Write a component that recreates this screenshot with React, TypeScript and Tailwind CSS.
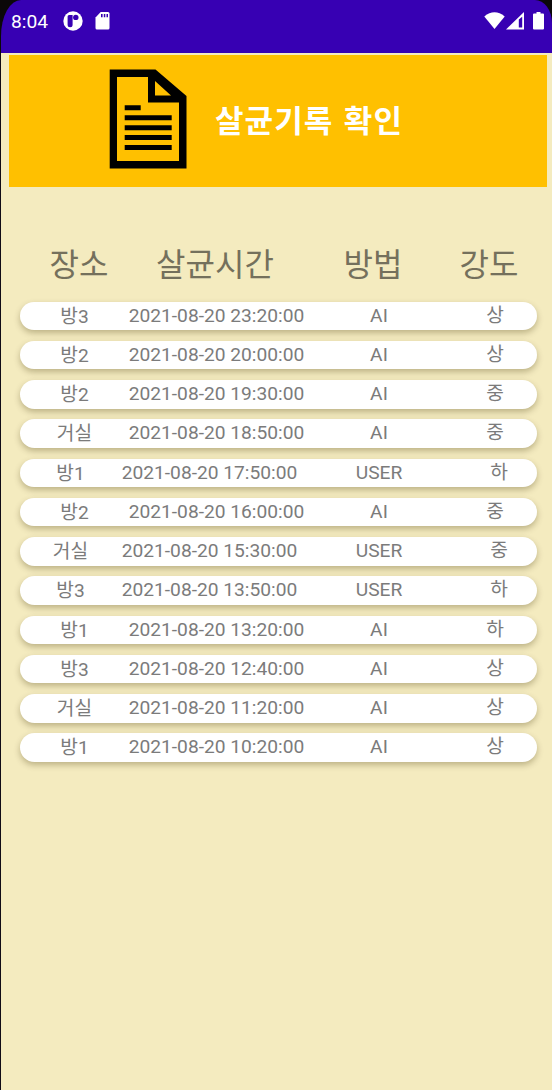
type LogEntry = { place: string; time: string; method: 'AI' | 'USER'; level: string };

const entries: LogEntry[] = [
  { place: '방3', time: '2021-08-20 23:20:00', method: 'AI', level: '상' },
  { place: '방2', time: '2021-08-20 20:00:00', method: 'AI', level: '상' },
  { place: '방2', time: '2021-08-20 19:30:00', method: 'AI', level: '중' },
  { place: '거실', time: '2021-08-20 18:50:00', method: 'AI', level: '중' },
  { place: '방1', time: '2021-08-20 17:50:00', method: 'USER', level: '하' },
  { place: '방2', time: '2021-08-20 16:00:00', method: 'AI', level: '중' },
  { place: '거실', time: '2021-08-20 15:30:00', method: 'USER', level: '중' },
  { place: '방3', time: '2021-08-20 13:50:00', method: 'USER', level: '하' },
  { place: '방1', time: '2021-08-20 13:20:00', method: 'AI', level: '하' },
  { place: '방3', time: '2021-08-20 12:40:00', method: 'AI', level: '상' },
  { place: '거실', time: '2021-08-20 11:20:00', method: 'AI', level: '상' },
  { place: '방1', time: '2021-08-20 10:20:00', method: 'AI', level: '상' },
];

function StatusBar() {
  return (
    <header className="h-[53px] bg-[#0b0809] pl-px">
      <div className="flex h-full items-start rounded-tl-[20px_36px] rounded-tr-[17px_23px] bg-[#3700b3] pl-[10px] text-white">
        <span className="mt-[10px] w-[52px] text-[19.2px] leading-[23px]">8:04</span>
        <svg className="mt-[11px] h-5 w-5" viewBox="0 0 20 20">
          <circle cx="10" cy="10" r="9.7" fill="#fff" />
          <path d="M4.6 5.5Q4.6 4 6.1 4H9.6V13.8a2.5 2.5 0 0 1-5 0Z" fill="#3700b3" />
          <circle cx="12.8" cy="6.4" r="2.7" fill="#3700b3" />
        </svg>
        <svg className="mt-[12px] ml-[12px] h-[18px] w-[15px]" viewBox="0 0 15 18">
          <path d="M5.7 0H13Q14.5 0 14.5 1.5V16Q14.5 17.5 13 17.5H2Q.5 17.5.5 16V5.5Z" fill="#fff" />
          <path d="M6 2h1.6v3.2H6zM8.8 2h1.5v3.2H8.8zM11.5 2H13v3.2h-1.5z" fill="#3700b3" />
        </svg>
        <svg className="mt-[12px] ml-auto h-[18px] w-[21px]" viewBox="0 0 21 18">
          <path d="M.3 4.4Q10.5-4 20.7 4.4L10.5 17Z" fill="#fff" />
        </svg>
        <svg className="mt-[12px] ml-[1px] h-[18px] w-[18px]" viewBox="0 0 18 18">
          <path fillRule="evenodd" d="M18 0V17.5H0ZM12.8 7.5V15.5H16.2V4.8Z" fill="#fff" />
        </svg>
        <svg className="mt-[12px] mr-[8px] ml-[9px] h-[18px] w-[11px]" viewBox="0 0 11 18">
          <path d="M3.5 0h4v1.6H10q1 0 1 1V16.5q0 1-1 1H1q-1 0-1-1V2.6q0-1 1-1H3.5Z" fill="#fff" />
        </svg>
      </div>
    </header>
  );
}

function Banner() {
  return (
    <section className="mr-[5px] ml-[7.5px] flex h-[132.5px] bg-[#ffc000]">
      <svg className="mt-[14.5px] ml-[100.5px] h-[100px] w-[78px] shrink-0" viewBox="0 0 78 100">
        <path
          fillRule="evenodd"
          d="M.7 .5H46.5L77.5 27V99.5H.7ZM8 8V92H70V33.5H39V8ZM46 12V26.5H62Z"
          fill="#000"
        />
        <path
          d="M15.7 36.3h16v5h-16zM15.7 46.3h47v5h-47zM15.7 56.3h47v5h-47zM15.7 66.1h47v5h-47zM15.7 76h47v5h-47z"
          fill="#000"
        />
      </svg>
      <h1 className="mt-[47.5px] ml-[28px] text-[31px] leading-[40px] font-bold tracking-[1.1px] whitespace-nowrap text-white [word-spacing:1.5px]">
        살균기록 확인
      </h1>
    </section>
  );
}

function ColumnHeadings() {
  return (
    <div className="mt-[53px] flex h-[50px] text-center text-[32px] leading-[50px] whitespace-nowrap text-[#74705c]">
      <span className="ml-[40px] w-[76px]">장소</span>
      <span className="ml-[28px] w-[140px]">살균시간</span>
      <span className="ml-[48px] w-[80px]">방법</span>
      <span className="ml-[36px] w-[80px]">강도</span>
    </div>
  );
}

function LogRow({ entry }: { entry: LogEntry }) {
  const manual = entry.method === 'USER';
  return (
    <li className="mr-[15px] ml-[18.7px] flex h-[28.6px] rounded-full bg-white text-center text-[19.2px] leading-[28px] whitespace-nowrap text-[#7b7b7b] shadow-[0_3px_6px_rgba(60,45,0,0.3)]">
      <span className={manual ? 'ml-[20.8px] w-[60px] pt-px' : 'ml-[24.8px] w-[60px] pt-px'}>{entry.place}</span>
      <span className={manual ? 'ml-[19px] w-[180px]' : 'ml-[22px] w-[180px]'}>{entry.time}</span>
      <span className={manual ? 'ml-[49.5px] w-[60px]' : 'ml-[42.5px] w-[60px]'}>{entry.method}</span>
      <span className={manual ? 'ml-[70px] w-[40px]' : 'ml-[66px] w-[40px]'}>{entry.level}</span>
    </li>
  );
}

export default function App() {
  return (
    <div className="h-[1090px] w-[552px] overflow-hidden bg-[#f4ebbf] font-[Roboto,'Noto_Sans_CJK_KR',sans-serif]">
      <StatusBar />
      <main className="h-[1037px] border-l border-[#100b16] pt-[1.5px]">
        <Banner />
        <ColumnHeadings />
        <ul className="mt-[11.5px] flex flex-col gap-[10.67px]">
          {entries.map((entry) => (
            <LogRow key={entry.time} entry={entry} />
          ))}
        </ul>
      </main>
    </div>
  );
}
